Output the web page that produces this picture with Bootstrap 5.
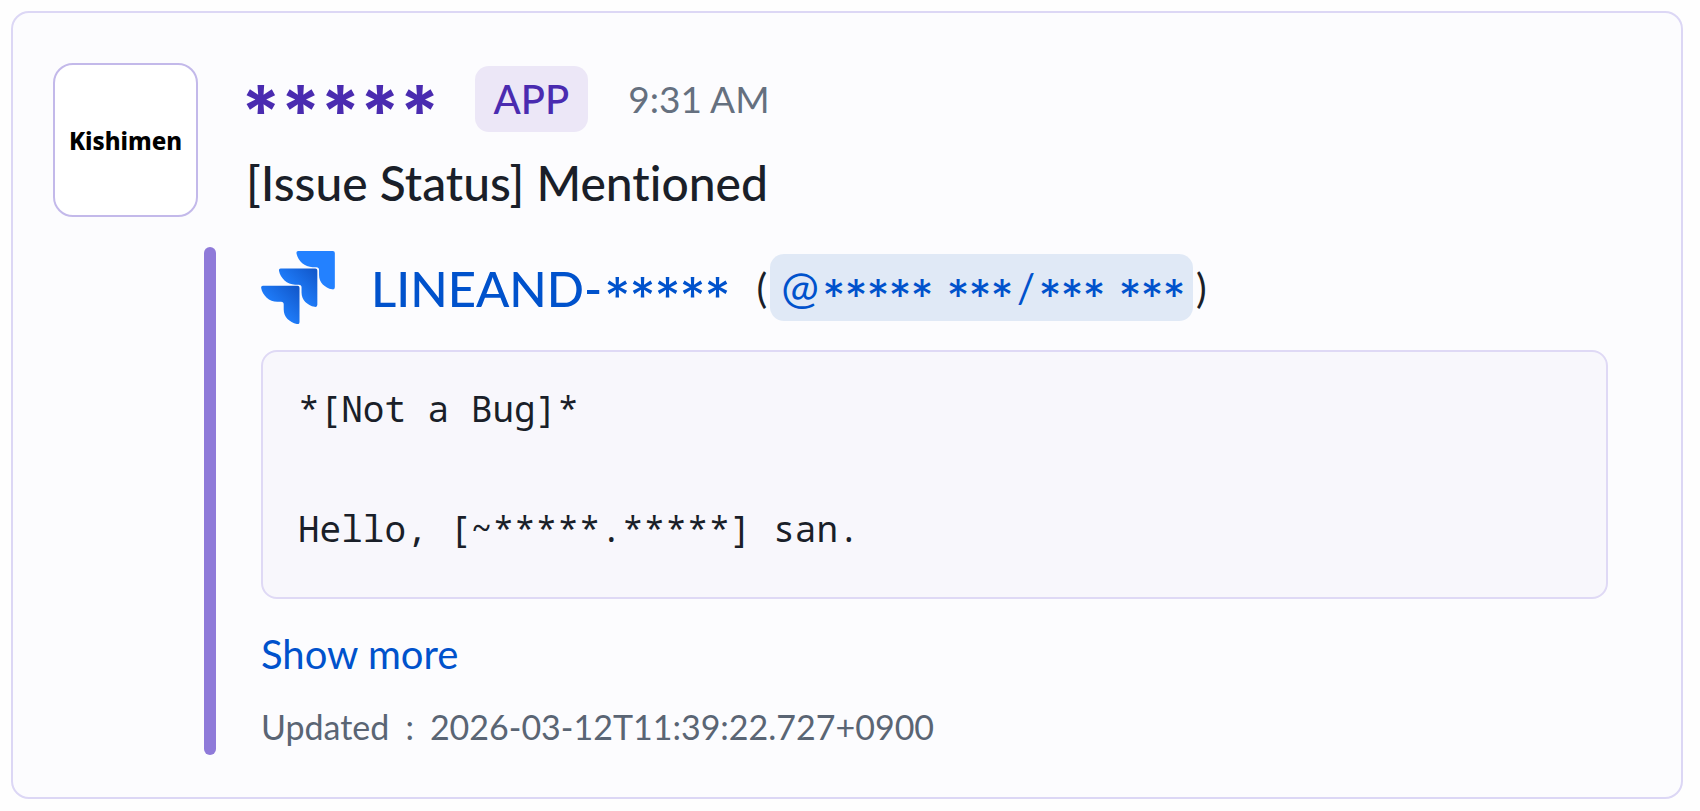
<!DOCTYPE html>
<html lang="en">
<head>
<meta charset="utf-8">
<meta name="viewport" content="width=device-width, initial-scale=1">
<title>Issue notification</title>
<link rel="stylesheet" href="https://cdn.jsdelivr.net/npm/bootstrap@5.3.0/dist/css/bootstrap.min.css">
<style>
  body { background: #fefefe; color: #1a1f29; font-family: Lato, "Liberation Sans", sans-serif; font-variant-ligatures: none; }
  .message { margin: 11px 17px 11px 11px; padding: 50px 73px 42px 40px; background: #fcfcfe; border: 2px solid #dcd7f5; border-radius: 18px; }
  .avatar { width: 145px; height: 154px; background: #fff; border: 2px solid #c3b9ea; border-radius: 20px; font: 800 24px "Noto Sans", sans-serif; color: #000; }
  .head { gap: 48px; }
  .head-text { padding-top: 3px; }
  .head-row { gap: 40px; height: 66px; }
  .stars { font-family: Inter, sans-serif; line-height: 1; padding-top: .35em; margin-inline: -.07em; }
  .sender { font-size: 71px; font-weight: 700; color: #4a2bb0; }
  .app-tag { padding: 0 19px; line-height: 66px; font-size: 40px; font-weight: 500; color: #4a2bb0; background: #ece7f7; border-radius: 14px; }
  .time { font-size: 37px; color: #65707f; }
  .title { margin: 21px 0 0; font-size: 48px; font-weight: 500; line-height: 60px; }
  .attachment { margin: 30px 0 0 151px; gap: 45px; }
  .rail { width: 12px; background: #8f7ad9; }
  .attachment-body { padding: 7px 0 3px; min-width: 0; }
  .blue { color: #0052cc; }
  .issue-row { height: 67px; }
  .logo { width: 74px; height: 73px; margin-right: 36px; }
  .issue-key { font-size: 49px; font-weight: 500; line-height: 60px; gap: 6px; }
  .issue-key .stars { font-size: 50px; font-weight: 400; }
  .mention-group { margin-left: 30px; gap: 3px; font-size: 40px; }
  .mention { height: 67px; padding: 0 11px; gap: 7px; background: #e0e9f6; border-radius: 14px; }
  .mention .stars { font-size: 44px; }
  .mention .next-word { padding-left: 13px; }
  .mention .at { font-size: 45px; }
  .code { margin: 29px 0 0; padding: 27px 35px 38px; background: #f8f7fc; border: 2px solid #dfd9f5; border-radius: 16px; font: 400 36px/60px "Noto Sans Mono", "Liberation Mono", monospace; }
  .more { margin-top: 25px; font-size: 40px; line-height: 60px; }
  .updated { margin-top: 18px; gap: 16px; font-size: 34px; line-height: 50px; color: #5a6574; }
</style>
</head>
<body>
<article class="message">
  <header class="head d-flex">
    <div class="avatar d-flex align-items-center justify-content-center flex-shrink-0">Kishimen</div>
    <div class="head-text">
      <div class="head-row d-flex align-items-center">
        <span class="sender stars">*****</span>
        <span class="app-tag">APP</span>
        <time class="time">9:31 AM</time>
      </div>
      <h1 class="title">[Issue Status] Mentioned</h1>
    </div>
  </header>
  <section class="attachment d-flex">
    <div class="rail rounded-pill flex-shrink-0"></div>
    <div class="attachment-body flex-grow-1">
      <div class="issue-row d-flex align-items-center">
        <svg class="logo flex-shrink-0" viewBox="0 0 219 217" aria-hidden="true">
          <defs>
            <linearGradient id="fold" x1="1" y1="0" x2=".35" y2=".65"><stop offset=".1" stop-color="#1259cc"/><stop offset="1" stop-color="#2080ff"/></linearGradient>
            <path id="chevron" d="M5 0H108q6 0 6 6V108q0 8-8 6C84 109 67 93 67 71V56q0-8-8-8H48C24 48 4 29 0 7Q-1 0 5 0Z"/>
          </defs>
          <use href="#chevron" x="105" fill="#2381ff"/>
          <use href="#chevron" x="53" y="52" fill="url(#fold)"/>
          <use href="#chevron" y="103" fill="url(#fold)"/>
        </svg>
        <a class="issue-key blue d-flex align-items-center text-decoration-none" href="#issue"><span>LINEAND-</span><span class="stars">*****</span></a>
        <div class="mention-group d-flex align-items-center">
          <span>(</span>
          <a class="mention blue d-flex align-items-center text-decoration-none" href="#user">
            <span class="at">@</span><span class="stars">*****</span>
            <span class="stars next-word">***</span><span>/</span><span class="stars">***</span>
            <span class="stars next-word">***</span>
          </a>
          <span>)</span>
        </div>
      </div>
      <pre class="code">*[Not a Bug]*

Hello, [~*****.*****] san.</pre>
      <a class="more blue d-block text-decoration-none" href="#more">Show more</a>
      <div class="updated d-flex"><span>Updated</span><span>:</span><time>2026-03-12T11:39:22.727+0900</time></div>
    </div>
  </section>
</article>
<script src="https://cdn.jsdelivr.net/npm/bootstrap@5.3.0/dist/js/bootstrap.bundle.min.js"></script>
</body>
</html>
